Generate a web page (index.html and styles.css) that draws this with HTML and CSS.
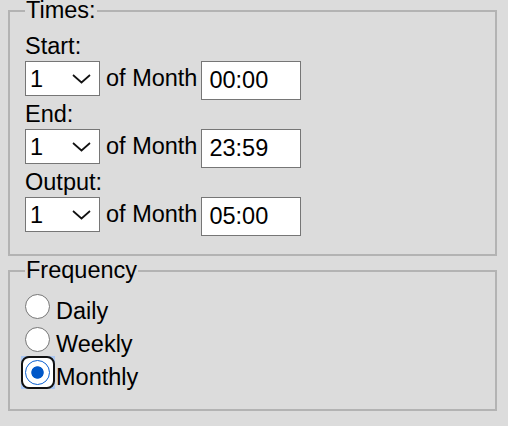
FILE: index.html
```html
<!DOCTYPE html>
<html>
<head>
<meta charset="utf-8">
<link rel="stylesheet" href="styles.css">
</head>
<body>
<fieldset class="fs fs-times">
  <legend class="lg">Times:</legend>
  <div class="grp">
    <div class="lbl">Start:</div>
    <div class="row">
      <span class="sel"><select class="day"><option>1</option></select><svg class="chev" width="19" height="10" viewBox="0 0 19 10"><polyline points="1,1 9.5,8.5 18,1" fill="none" stroke="#111" stroke-width="1.7"/></svg></span>
      <span class="of">of Month</span>
      <input class="time" type="text" value="00:00">
    </div>
  </div>
  <div class="grp">
    <div class="lbl">End:</div>
    <div class="row">
      <span class="sel"><select class="day"><option>1</option></select><svg class="chev" width="19" height="10" viewBox="0 0 19 10"><polyline points="1,1 9.5,8.5 18,1" fill="none" stroke="#111" stroke-width="1.7"/></svg></span>
      <span class="of">of Month</span>
      <input class="time" type="text" value="23:59">
    </div>
  </div>
  <div class="grp">
    <div class="lbl">Output:</div>
    <div class="row">
      <span class="sel"><select class="day"><option>1</option></select><svg class="chev" width="19" height="10" viewBox="0 0 19 10"><polyline points="1,1 9.5,8.5 18,1" fill="none" stroke="#111" stroke-width="1.7"/></svg></span>
      <span class="of">of Month</span>
      <input class="time" type="text" value="05:00">
    </div>
  </div>
</fieldset>
<fieldset class="fs fs-freq">
  <legend class="lg">Frequency</legend>
  <div class="opt"><input class="rad" type="radio" name="freq">Daily</div>
  <div class="opt"><input class="rad" type="radio" name="freq">Weekly</div>
  <div class="opt"><span class="focus"><input class="rad" type="radio" name="freq" checked></span>Monthly</div>
</fieldset>
</body>
</html>
```
FILE: styles.css
```css
html {
  background: #dcdcdc;
}
body {
  margin: 0;
  padding: 0 8px;
  font-family: "Liberation Sans", Arial, sans-serif;
  font-size: 23.5px;
  color: #000;
}
.fs {
  box-sizing: border-box;
  width: 489px;
  margin: 0;
  border: 2px solid #b3b3b3;
  min-inline-size: 0;
}
.fs-times {
  padding: 11px 13px 17px 15px;
}
.fs-freq {
  margin-top: 4px;
  padding: 10px 13px 18px 15px;
}
.lg {
  padding: 0 1px 2px;
  line-height: 20px;
}
.lbl {
  line-height: normal;
}
.row {
  display: flex;
  align-items: flex-start;
  margin: 1px 0;
}
.sel {
  position: relative;
  display: block;
  height: 35px;
}
.day {
  -webkit-appearance: none;
  appearance: none;
  box-sizing: border-box;
  width: 75px;
  height: 35px;
  margin: 0;
  padding: 0 4px;
  border: 1px solid #767676;
  border-radius: 0;
  background: #fff;
  color: #000;
  font: inherit;
  outline: none;
}
.chev {
  position: absolute;
  right: 9px;
  top: 13px;
  pointer-events: none;
}
.of {
  margin: 4px 4px 0 6px;
  white-space: nowrap;
}
.time {
  box-sizing: border-box;
  width: 100px;
  height: 39px;
  margin: 0;
  padding: 5px 7px;
  border: 1px solid #767676;
  border-radius: 0;
  background: #fff;
  color: #000;
  font: inherit;
  outline: none;
}
.opt {
  line-height: normal;
}
.rad {
  -webkit-appearance: none;
  appearance: none;
  box-sizing: border-box;
  width: 25px;
  height: 25px;
  margin: 2px 6px 0 0;
  border: 1px solid #767676;
  border-radius: 50%;
  background: #fff;
  vertical-align: baseline;
}
.rad:checked {
  border: 1.5px solid #0a5fd0;
  background: radial-gradient(circle, #0057c8 0, #0057c8 5.8px, #fff 6.6px);
}
.focus {
  position: relative;
  display: inline-block;
  line-height: 0;
  margin: 2px 6px 0 0;
}
.focus::before {
  content: "";
  position: absolute;
  left: -4px;
  top: -4px;
  right: -5px;
  bottom: -4px;
  background: #abc7f2;
  z-index: 0;
}
.focus::after {
  content: "";
  position: absolute;
  left: -4px;
  top: -4px;
  right: -5px;
  bottom: -4px;
  box-sizing: border-box;
  border: 2px solid #111;
  border-radius: 8px;
  background: #fff;
  box-shadow: inset 0 0 0 1px #fff;
  z-index: 1;
}
.focus .rad {
  position: relative;
  z-index: 2;
  margin: 0;
}
```
